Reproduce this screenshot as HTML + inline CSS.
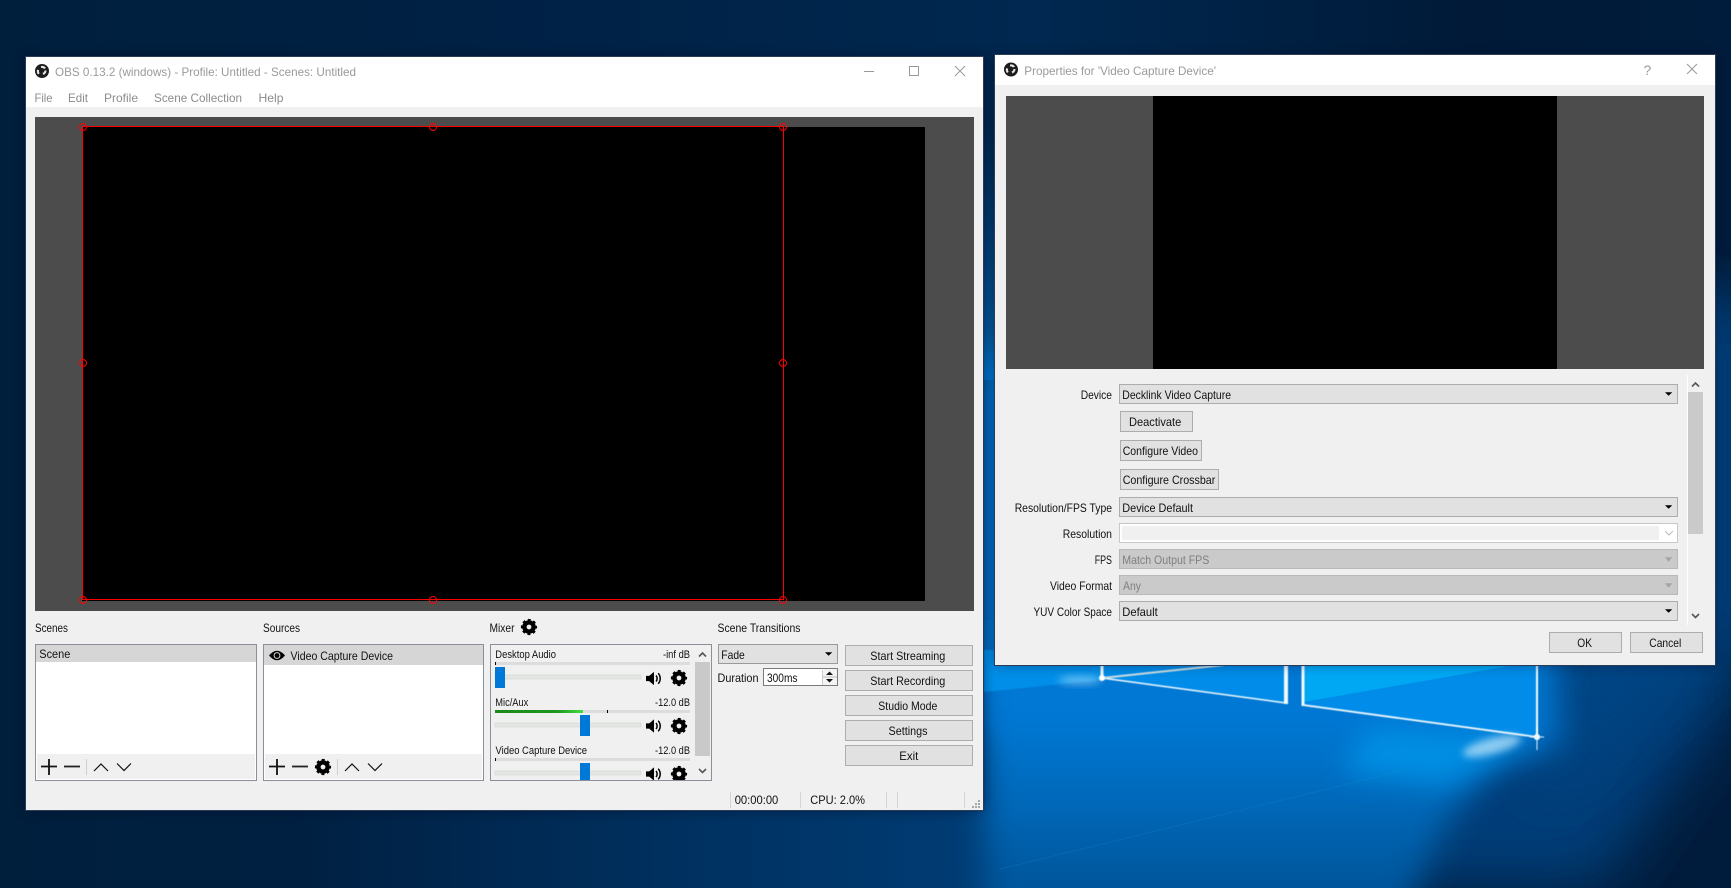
<!DOCTYPE html>
<html><head><meta charset="utf-8"><title>OBS</title>
<style>
html,body{margin:0;padding:0;background:#00203f;width:1731px;height:888px;overflow:hidden}
svg{display:block}
text{font-family:"Liberation Sans",sans-serif;font-size:12px;fill:#111;white-space:pre}
.t{fill:#9a9a9a}.m{fill:#8c8c8c}.s{font-size:11px}.d{fill:#7f7f7f}
.b{fill:#e1e1e1;stroke:#adadad}.x{fill:#cacaca;stroke:#b8b8b8}
.l{fill:none;stroke:#111;stroke-width:1.2}
</style></head><body>
<svg width="1731" height="888" viewBox="0 0 1731 888" xmlns="http://www.w3.org/2000/svg">
<defs>
<linearGradient id="bg" x1="0" x2="1" y1="0" y2="0"><stop offset="0" stop-color="#001f3d"/><stop offset=".3" stop-color="#002145"/><stop offset=".6" stop-color="#002850"/><stop offset=".85" stop-color="#001a38"/><stop offset="1" stop-color="#001c3c"/></linearGradient>
<linearGradient id="main" gradientUnits="userSpaceOnUse" x1="0" x2="0" y1="720" y2="888"><stop offset="0" stop-color="#0078d4"/><stop offset=".5" stop-color="#0068b8"/><stop offset="1" stop-color="#00559a"/></linearGradient>
<linearGradient id="strip" gradientUnits="userSpaceOnUse" x1="300" x2="983" y1="0" y2="0"><stop offset="0" stop-color="#003a70" stop-opacity="0"/><stop offset="1" stop-color="#003c74"/></linearGradient>
<linearGradient id="gap" x1="0" x2="0" y1="0" y2="1"><stop offset="0" stop-color="#00508f" stop-opacity="0"/><stop offset="1" stop-color="#0068b4"/></linearGradient>
<linearGradient id="meter" x1="0" x2="1" y1="0" y2="0"><stop offset="0" stop-color="#1a8a1a"/><stop offset=".7" stop-color="#1f961f"/><stop offset="1" stop-color="#3fe03f"/></linearGradient>
<filter id="b30" x="-40%" y="-40%" width="180%" height="180%"><feGaussianBlur stdDeviation="30"/></filter>
<filter id="b16" x="-20%" y="-20%" width="140%" height="140%"><feGaussianBlur stdDeviation="16"/></filter>
<filter id="b14" x="-50%" y="-80%" width="200%" height="260%"><feGaussianBlur stdDeviation="14"/></filter>
<filter id="b4" x="-30%" y="-60%" width="160%" height="220%"><feGaussianBlur stdDeviation="4"/></filter>
<filter id="b1" x="-10%" y="-10%" width="120%" height="120%"><feGaussianBlur stdDeviation=".4"/></filter>
<filter id="sh" x="-5%" y="-5%" width="110%" height="110%"><feGaussianBlur stdDeviation="6"/></filter>
<symbol id="gear" viewBox="-8 -8 16 16" overflow="visible"><circle r="4.6" fill="none" stroke="#000" stroke-width="4.4"/><circle r="7" fill="none" stroke="#000" stroke-width="2.2" stroke-dasharray="2.9 2.6" stroke-dashoffset="1.45"/></symbol>
<symbol id="spk" viewBox="-8 -7 16 14" overflow="visible"><path d="M-8-2.6h3.2L0-6.6V6.6L-4.800 2.600H-8z" fill="#000"/><path d="M2-3a4.500 4.500 0 0 1 0 6M4.200-5.300a8 8 0 0 1 0 10.600" fill="none" stroke="#000" stroke-width="1.500"/></symbol>
<symbol id="logo" viewBox="-7 -7 14 14" overflow="visible"><circle r="7" fill="#1d1d1f"/><path d="M-1-5a5 5 0 0 1 5 2l-2 1a3 3 0 0 0-3-1zM4.500-.5a5 5 0 0 1-3 4.500l-1-2a3 3 0 0 0 2-2.500zM-4 3.500a5 5 0 0 1-.8-5l2 .8a3 3 0 0 0 .5 3z" fill="#e6e6e6"/></symbol>
</defs>

<!-- wallpaper -->
<rect width="1731" height="888" fill="url(#bg)"/>
<rect x="300" y="620" width="800" height="268" fill="url(#strip)"/>
<rect x="960" y="120" width="60" height="260" fill="url(#gap)"/>
<polygon points="1540,300 1731,300 1731,700 1600,888 1400,888 1400,700" fill="#003c78" filter="url(#b30)"/>
<polygon points="1540,300 1731,300 1731,640 1540,800" fill="#004484" filter="url(#b30)"/>
<polygon points="975,360 1540,360 1560,745 1500,765 1450,815 1400,930 985,930 985,745 975,720" fill="url(#main)" filter="url(#b16)"/>
<polygon points="1537,737 1370,728 1340,772 1445,785" fill="#009cf0" opacity=".7" filter="url(#b14)"/>
<polygon points="1102,678 1286,703 1286,650 1102,650" fill="#008ce8"/>
<polygon points="1303,705 1538,737 1538,650 1303,650" fill="#008ce8"/>
<polygon points="1303,702 1504,667 1538,650 1303,650" fill="#00a8f4"/>
<polygon points="984,692 1102,680 1102,650 984,650" fill="#008ee8" filter="url(#b1)"/>
<path d="M1000 869L1417 767" stroke="#2a94e0" stroke-width="1" opacity=".2" fill="none"/>
<g filter="url(#b1)" fill="none" stroke="#f2faff">
<path d="M1102 650V678" stroke-width="3"/>
<path d="M1102 678L1286 703" stroke-width="1.500"/>
<path d="M1286 650V704" stroke-width="4"/>
<path d="M1303 650V706" stroke-width="3"/>
<path d="M1303 705L1537 737" stroke-width="1.800"/>
<path d="M1537 650V737" stroke-width="2"/>
<path d="M1102 678L1224 665" stroke-width="2" stroke="#cfe0e4"/>
</g>
<ellipse cx="1492" cy="746" rx="30" ry="8" fill="#d5f1ff" opacity=".65" transform="rotate(-15 1492 746)" filter="url(#b4)"/>
<ellipse cx="1080" cy="680" rx="22" ry="4" fill="#bfeaff" opacity=".55" filter="url(#b4)"/>
<circle cx="1537" cy="737" r="3" fill="#fff" filter="url(#b1)"/>
<circle cx="1102" cy="678" r="3" fill="#fff" filter="url(#b1)"/>
<path d="M1537 726V750M1530 737H1544" stroke="#dff4ff" stroke-width="1" filter="url(#b1)"/>

<!-- shadows -->
<rect x="26" y="57" width="957" height="753" fill="#00101f" opacity=".5" filter="url(#sh)"/>
<rect x="995" y="55" width="720" height="610" fill="#00101f" opacity=".4" filter="url(#sh)"/>

<!-- MAIN WINDOW -->
<rect x="25.500" y="56.500" width="958" height="754" fill="#f0f0f0" stroke="#2c3c55"/>
<rect x="26" y="57" width="957" height="50" fill="#fff"/>
<use href="#logo" x="35" y="64" width="14" height="14"/>
<text class="t" x="55" y="76" textLength="301" lengthAdjust="spacingAndGlyphs">OBS 0.13.2 (windows) - Profile: Untitled - Scenes: Untitled</text>
<path d="M864 71.500H874" stroke="#999" fill="none"/><rect x="909.500" y="66.500" width="9" height="9" fill="none" stroke="#999"/><path d="M955 66L965 76M965 66L955 76" stroke="#999" fill="none"/>
<text class="m" x="34.500" y="102" textLength="18" lengthAdjust="spacingAndGlyphs">File</text>
<text class="m" x="68" y="102" textLength="20" lengthAdjust="spacingAndGlyphs">Edit</text>
<text class="m" x="104" y="102" textLength="34" lengthAdjust="spacingAndGlyphs">Profile</text>
<text class="m" x="154" y="102" textLength="88" lengthAdjust="spacingAndGlyphs">Scene Collection</text>
<text class="m" x="258.500" y="102" textLength="25" lengthAdjust="spacingAndGlyphs">Help</text>

<!-- preview -->
<rect x="35" y="117" width="939" height="494" fill="#4c4c4c"/>
<rect x="82" y="127" width="843" height="474" fill="#000"/>
<rect x="82.500" y="126.500" width="701" height="473" fill="none" stroke="#f00" stroke-width="1"/>
<g fill="none" stroke="#f00"><circle cx="83" cy="127" r="3.500"/><circle cx="433" cy="127" r="3.500"/><circle cx="783" cy="127" r="3.500"/><circle cx="83" cy="363" r="3.500"/><circle cx="783" cy="363" r="3.500"/><circle cx="83" cy="600" r="3.500"/><circle cx="433" cy="600" r="3.500"/><circle cx="783" cy="600" r="3.500"/></g>

<text x="35" y="632" textLength="33" lengthAdjust="spacingAndGlyphs">Scenes</text>
<text x="263" y="632" textLength="37" lengthAdjust="spacingAndGlyphs">Sources</text>
<text x="489.500" y="632" textLength="25" lengthAdjust="spacingAndGlyphs">Mixer</text>
<use href="#gear" x="521" y="619" width="16" height="16"/>
<text x="717.500" y="632" textLength="83" lengthAdjust="spacingAndGlyphs">Scene Transitions</text>

<!-- scenes -->
<rect x="35.500" y="644.500" width="221" height="136" fill="#fff" stroke="#8b8f97"/>
<rect x="36" y="645" width="220" height="17" fill="#d6d6d6"/>
<text x="39.300" y="658" textLength="31" lengthAdjust="spacingAndGlyphs">Scene</text>
<rect x="37" y="754" width="218" height="25" fill="#f0f0f0"/>
<path d="M41 766.500H57M49 759V775" stroke="#111" stroke-width="1.800" fill="none"/>
<path d="M64 766.500H80" stroke="#222" stroke-width="1.800" fill="none"/>
<path d="M86.500 759V775" stroke="#cfcfcf" fill="none"/>
<path d="M94 771L101 764L108 771M117 763.500L124 770.500L131 763.500" class="l"/>

<!-- sources -->
<rect x="263.500" y="644.500" width="220" height="136" fill="#fff" stroke="#8b8f97"/>
<rect x="264" y="645" width="219" height="20" fill="#d6d6d6"/>
<path d="M269 655.500Q277 646 285 655.500Q277 665 269 655.500Z" fill="#000"/><circle cx="277" cy="655.500" r="3.400" fill="#d6d6d6"/><circle cx="277" cy="655.500" r="2.400" fill="#000"/>
<text x="290.500" y="660" textLength="102.500" lengthAdjust="spacingAndGlyphs">Video Capture Device</text>
<rect x="265" y="754" width="217" height="25" fill="#f0f0f0"/>
<path d="M269 766.500H285M277 759V775" stroke="#111" stroke-width="1.800" fill="none"/>
<path d="M292 766.500H308" stroke="#222" stroke-width="1.800" fill="none"/>
<use href="#gear" x="315" y="759" width="16" height="16"/>
<path d="M337.500 759V775" stroke="#cfcfcf" fill="none"/>
<path d="M345 771L352 764L359 771M368 763.500L375 770.500L382 763.500" class="l"/>

<!-- mixer -->
<rect x="490.500" y="644.500" width="221" height="136" fill="#f0f0f0" stroke="#8b8f97"/>
<text class="s" x="495.300" y="658" textLength="60.700" lengthAdjust="spacingAndGlyphs">Desktop Audio</text>
<text class="s" x="663" y="658" textLength="27" lengthAdjust="spacingAndGlyphs">-inf dB</text>
<rect x="495" y="662" width="195" height="3" fill="#dcdcdc"/><rect x="495" y="662" width="1" height="3" fill="#000"/>
<rect x="495" y="675" width="146" height="4" fill="#e3e6e3" stroke="#d4d8d4" stroke-width=".6"/>
<rect x="495" y="667" width="10" height="21" fill="#0078d7"/>
<use href="#spk" x="646" y="671.500" width="16" height="14"/><use href="#gear" x="671" y="670" width="16" height="16"/>

<text class="s" x="495.300" y="706" textLength="33" lengthAdjust="spacingAndGlyphs">Mic/Aux</text>
<text class="s" x="655" y="706" textLength="35" lengthAdjust="spacingAndGlyphs">-12.0 dB</text>
<rect x="495" y="710" width="195" height="3" fill="#dcdcdc"/><rect x="495" y="710" width="88" height="3" fill="url(#meter)"/><rect x="607" y="710" width="1" height="3" fill="#000"/>
<rect x="495" y="723" width="146" height="4" fill="#e3e6e3" stroke="#d4d8d4" stroke-width=".6"/>
<rect x="580" y="715" width="10" height="21" fill="#0078d7"/>
<use href="#spk" x="646" y="719" width="16" height="14"/><use href="#gear" x="671" y="718" width="16" height="16"/>

<text class="s" x="495.500" y="754" textLength="91.500" lengthAdjust="spacingAndGlyphs">Video Capture Device</text>
<text class="s" x="655" y="754" textLength="35" lengthAdjust="spacingAndGlyphs">-12.0 dB</text>
<rect x="495" y="758" width="195" height="3" fill="#dcdcdc"/><rect x="495" y="758" width="1" height="3" fill="#000"/>
<rect x="495" y="771" width="146" height="4" fill="#e3e6e3" stroke="#d4d8d4" stroke-width=".6"/>
<svg x="491" y="645" width="220" height="135" viewBox="491 645 220 135">
<rect x="580" y="763" width="10" height="21" fill="#0078d7"/>
<use href="#spk" x="646" y="767" width="16" height="14"/><use href="#gear" x="671" y="766" width="16" height="16"/>
</svg>
<rect x="695" y="662" width="15" height="94" fill="#c9c9c9"/>
<path d="M699 656.500L702.500 653L706 656.500M699 769L702.500 772.500L706 769" fill="none" stroke="#555" stroke-width="1.600"/>

<!-- transitions -->
<rect x="718.500" y="644.500" width="119" height="19" class="b" style="stroke:#9a9a9a"/>
<text x="721.300" y="659" textLength="23.500" lengthAdjust="spacingAndGlyphs">Fade</text>
<path d="M825 652.300H832.300L828.600 655.800Z" fill="#000"/>
<text x="717.500" y="682" textLength="41" lengthAdjust="spacingAndGlyphs">Duration</text>
<rect x="763.500" y="668.500" width="74" height="17" fill="#fff" stroke="#7a7a7a"/>
<text x="767" y="682" textLength="30.500" lengthAdjust="spacingAndGlyphs">300ms</text>
<path d="M822.500 670V685" stroke="#ccc"/><rect x="823" y="669" width="14" height="16" fill="#f4f4f4"/><path d="M823 677H837" stroke="#bbb"/>
<path d="M826 675H833L829.500 671.500ZM826 679H833L829.500 682.500Z" fill="#111"/>

<!-- buttons -->
<g class="b"><rect class="b" x="845.500" y="645.500" width="127" height="20"/><rect class="b" x="845.500" y="670.500" width="127" height="20"/><rect class="b" x="845.500" y="695.500" width="127" height="20"/><rect class="b" x="845.500" y="720.500" width="127" height="20"/><rect class="b" x="845.500" y="745.500" width="127" height="20"/></g>
<text x="870.300" y="660" textLength="75" lengthAdjust="spacingAndGlyphs">Start Streaming</text>
<text x="870.300" y="685" textLength="75" lengthAdjust="spacingAndGlyphs">Start Recording</text>
<text x="878.300" y="710" textLength="59" lengthAdjust="spacingAndGlyphs">Studio Mode</text>
<text x="888.500" y="735" textLength="39" lengthAdjust="spacingAndGlyphs">Settings</text>
<text x="899.300" y="760" textLength="19" lengthAdjust="spacingAndGlyphs">Exit</text>

<!-- status -->
<path d="M730.500 792V808M800.500 792V808M886.500 792V808M897.500 792V808M964.500 792V808" stroke="#d4d4d4" fill="none"/>
<text x="734.700" y="804" textLength="43.600" lengthAdjust="spacingAndGlyphs">00:00:00</text>
<text x="810.300" y="804" textLength="54.700" lengthAdjust="spacingAndGlyphs">CPU: 2.0%</text>
<path d="M972 807h2M975 807h2M978 807h2M975 804h2M978 804h2M978 801h2" stroke="#a8a8a8" stroke-width="2" fill="none"/>

<!-- PROPERTIES WINDOW -->
<rect x="994.500" y="54.500" width="721" height="611" fill="#f0f0f0" stroke="#2c3c55"/>
<rect x="995" y="55" width="720" height="30" fill="#fff"/>
<use href="#logo" x="1004" y="62.500" width="14" height="14"/>
<text class="t" x="1024.300" y="75" textLength="191.700" lengthAdjust="spacingAndGlyphs">Properties for 'Video Capture Device'</text>
<text class="t" x="1643.500" y="75" style="font-size:14px">?</text>
<path d="M1687 64L1697 74M1697 64L1687 74" stroke="#999" fill="none"/>
<rect x="1006" y="96" width="698" height="273" fill="#4c4c4c"/>
<rect x="1153" y="96" width="404" height="273" fill="#000"/>

<text x="1080.700" y="399" textLength="31.300" lengthAdjust="spacingAndGlyphs">Device</text>
<rect class="b" x="1119.500" y="384.500" width="558" height="19"/>
<text x="1122.300" y="399" textLength="108.700" lengthAdjust="spacingAndGlyphs">Decklink Video Capture</text>
<path d="M1665 392.300H1672.300L1668.600 395.800Z" fill="#000"/>
<rect class="b" x="1120.500" y="411.500" width="72" height="20"/>
<text x="1129" y="426" textLength="52.300" lengthAdjust="spacingAndGlyphs">Deactivate</text>
<rect class="b" x="1120.500" y="440.500" width="81" height="20"/>
<text x="1122.700" y="455" textLength="75.300" lengthAdjust="spacingAndGlyphs">Configure Video</text>
<rect class="b" x="1120.500" y="469.500" width="98" height="20"/>
<text x="1122.700" y="484" textLength="92.600" lengthAdjust="spacingAndGlyphs">Configure Crossbar</text>

<text x="1014.700" y="512" textLength="97.300" lengthAdjust="spacingAndGlyphs">Resolution/FPS Type</text>
<rect class="b" x="1119.500" y="497.500" width="558" height="19"/>
<text x="1122.300" y="512" textLength="70.700" lengthAdjust="spacingAndGlyphs">Device Default</text>
<path d="M1665 505.300H1672.300L1668.600 508.800Z" fill="#000"/>

<text x="1062.700" y="538" textLength="49.300" lengthAdjust="spacingAndGlyphs">Resolution</text>
<rect x="1119.500" y="523.500" width="558" height="19" fill="#fff" stroke="#c8c8c8"/>
<rect x="1122" y="526" width="537" height="14" fill="#f0f0f0"/>
<path d="M1665 531L1669 535L1673 531" fill="none" stroke="#bbb"/>

<text x="1094.700" y="564" textLength="17.300" lengthAdjust="spacingAndGlyphs">FPS</text>
<rect class="x" x="1119.500" y="549.500" width="558" height="19"/>
<text class="d" x="1122.300" y="564" textLength="87" lengthAdjust="spacingAndGlyphs">Match Output FPS</text>
<path d="M1665 557.300H1672.300L1668.600 561.800Z" fill="#a4a4a4"/>

<text x="1050" y="590" textLength="62" lengthAdjust="spacingAndGlyphs">Video Format</text>
<rect class="x" x="1119.500" y="575.500" width="558" height="19"/>
<text class="d" x="1123" y="590" textLength="18" lengthAdjust="spacingAndGlyphs">Any</text>
<path d="M1665 583.300H1672.300L1668.600 587.800Z" fill="#a4a4a4"/>

<text x="1033.500" y="616" textLength="78.500" lengthAdjust="spacingAndGlyphs">YUV Color Space</text>
<rect class="b" x="1119.500" y="601.500" width="558" height="19"/>
<text x="1122.300" y="616" textLength="35.400" lengthAdjust="spacingAndGlyphs">Default</text>
<path d="M1665 609.300H1672.300L1668.600 612.800Z" fill="#000"/>

<path d="M1687.500 375V625" stroke="#fff" fill="none"/>
<rect x="1688" y="392" width="15" height="142" fill="#cacaca"/>
<path d="M1692 386.500L1695.500 383L1699 386.500M1692 614L1695.500 617.500L1699 614" fill="none" stroke="#555" stroke-width="1.600"/>

<rect class="b" x="1549.500" y="632.500" width="72" height="20"/>
<text x="1577.300" y="647" textLength="14.700" lengthAdjust="spacingAndGlyphs">OK</text>
<rect class="b" x="1630.500" y="632.500" width="72" height="20"/>
<text x="1649.300" y="647" textLength="32" lengthAdjust="spacingAndGlyphs">Cancel</text>
</svg>
</body></html>
